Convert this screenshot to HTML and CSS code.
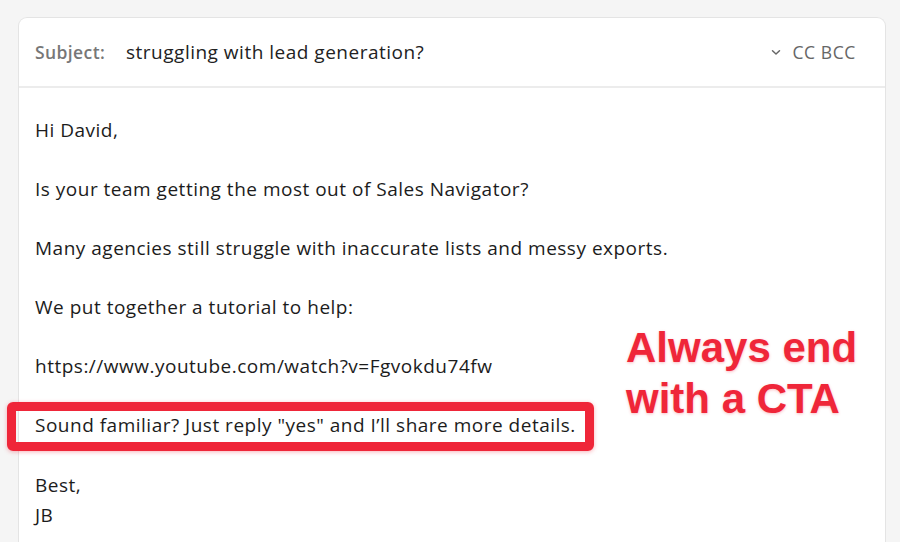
FILE: index.html
```html
<!DOCTYPE html>
<html lang="en">
<head>
<meta charset="utf-8">
<title>Email</title>
<link rel="stylesheet" href="styles.css">
</head>
<body>
<div class="page">
  <div class="card">
    <div class="header">
      <span class="label">Subject:</span>
      <span class="subject">struggling with lead generation?</span>
      <span class="cc">
        <svg class="chev" width="10" height="7" viewBox="0 0 10 7"><path d="M1.5 1.8 L5 5 L8.5 1.8" fill="none" stroke="#666" stroke-width="1.5" stroke-linecap="round" stroke-linejoin="round"/></svg>
        CC BCC
      </span>
    </div>
    <div class="body">
      <p>Hi David,</p>
      <p>Is your team getting the most out of Sales Navigator?</p>
      <p>Many agencies still struggle with inaccurate lists and messy exports.</p>
      <p>We put together a tutorial to help:</p>
      <p>https://www.youtube.com/watch?v=Fgvokdu74fw</p>
      <p class="cta">Sound familiar? Just reply "yes" and I’ll share more details.</p>
      <p class="sign">Best,<br>JB</p>
    </div>
  </div>
  <div class="note">Always end<br>with a CTA</div>
</div>
</body>
</html>
```

FILE: styles.css
```css
*, *::before, *::after { box-sizing: border-box; }
html, body { margin: 0; padding: 0; }
body {
  width: 900px;
  height: 542px;
  overflow: hidden;
  background: #f5f5f5;
  font-family: "Open Sans", "Noto Sans", sans-serif;
  color: #1c1c1c;
}
.page {
  position: relative;
  padding: 17px 14px 0 18px;
  height: 542px;
}
.card {
  background: #fff;
  border: 1px solid #e4e4e4;
  border-radius: 9px 9px 0 0;
  border-bottom: none;
  height: 525px;
}
.header {
  display: flex;
  align-items: center;
  height: 70px;
  padding: 0 29px 0 16px;
  border-bottom: 2px solid #ececec;
  font-size: 19px;
  letter-spacing: 0.5px;
}
.label {
  color: #777;
  font-weight: 600;
  font-size: 17.5px;
  letter-spacing: 0.4px;
  width: 91px;
}
.subject {
  color: #222;
  flex: 1;
}
.cc {
  display: flex;
  align-items: center;
  gap: 11px;
  color: #666;
  font-size: 17.5px;
  letter-spacing: 0.6px;
}
.body {
  padding: 28px 16px 0 16px;
  font-size: 19px;
  line-height: 29.5px;
  letter-spacing: 0.5px;
}
.body p {
  margin: 0 0 29.5px 0;
}
.body p.sign {
  line-height: 30px;
}
.cta {
  position: relative;
}
.cta::after {
  content: "";
  position: absolute;
  left: -28px;
  top: -9px;
  width: 587px;
  height: 49px;
  border: 9px solid #ef2639;
  border-radius: 6px;
  box-shadow: 0 1px 4px rgba(239, 38, 57, 0.35);
}
.note {
  position: absolute;
  left: 626px;
  top: 322px;
  font-family: "Liberation Sans", Arial, sans-serif;
  font-weight: 700;
  font-size: 42px;
  line-height: 51px;
  color: #ef2639;
  text-shadow: 0 1px 3px rgba(239, 38, 57, 0.3);
}
```
